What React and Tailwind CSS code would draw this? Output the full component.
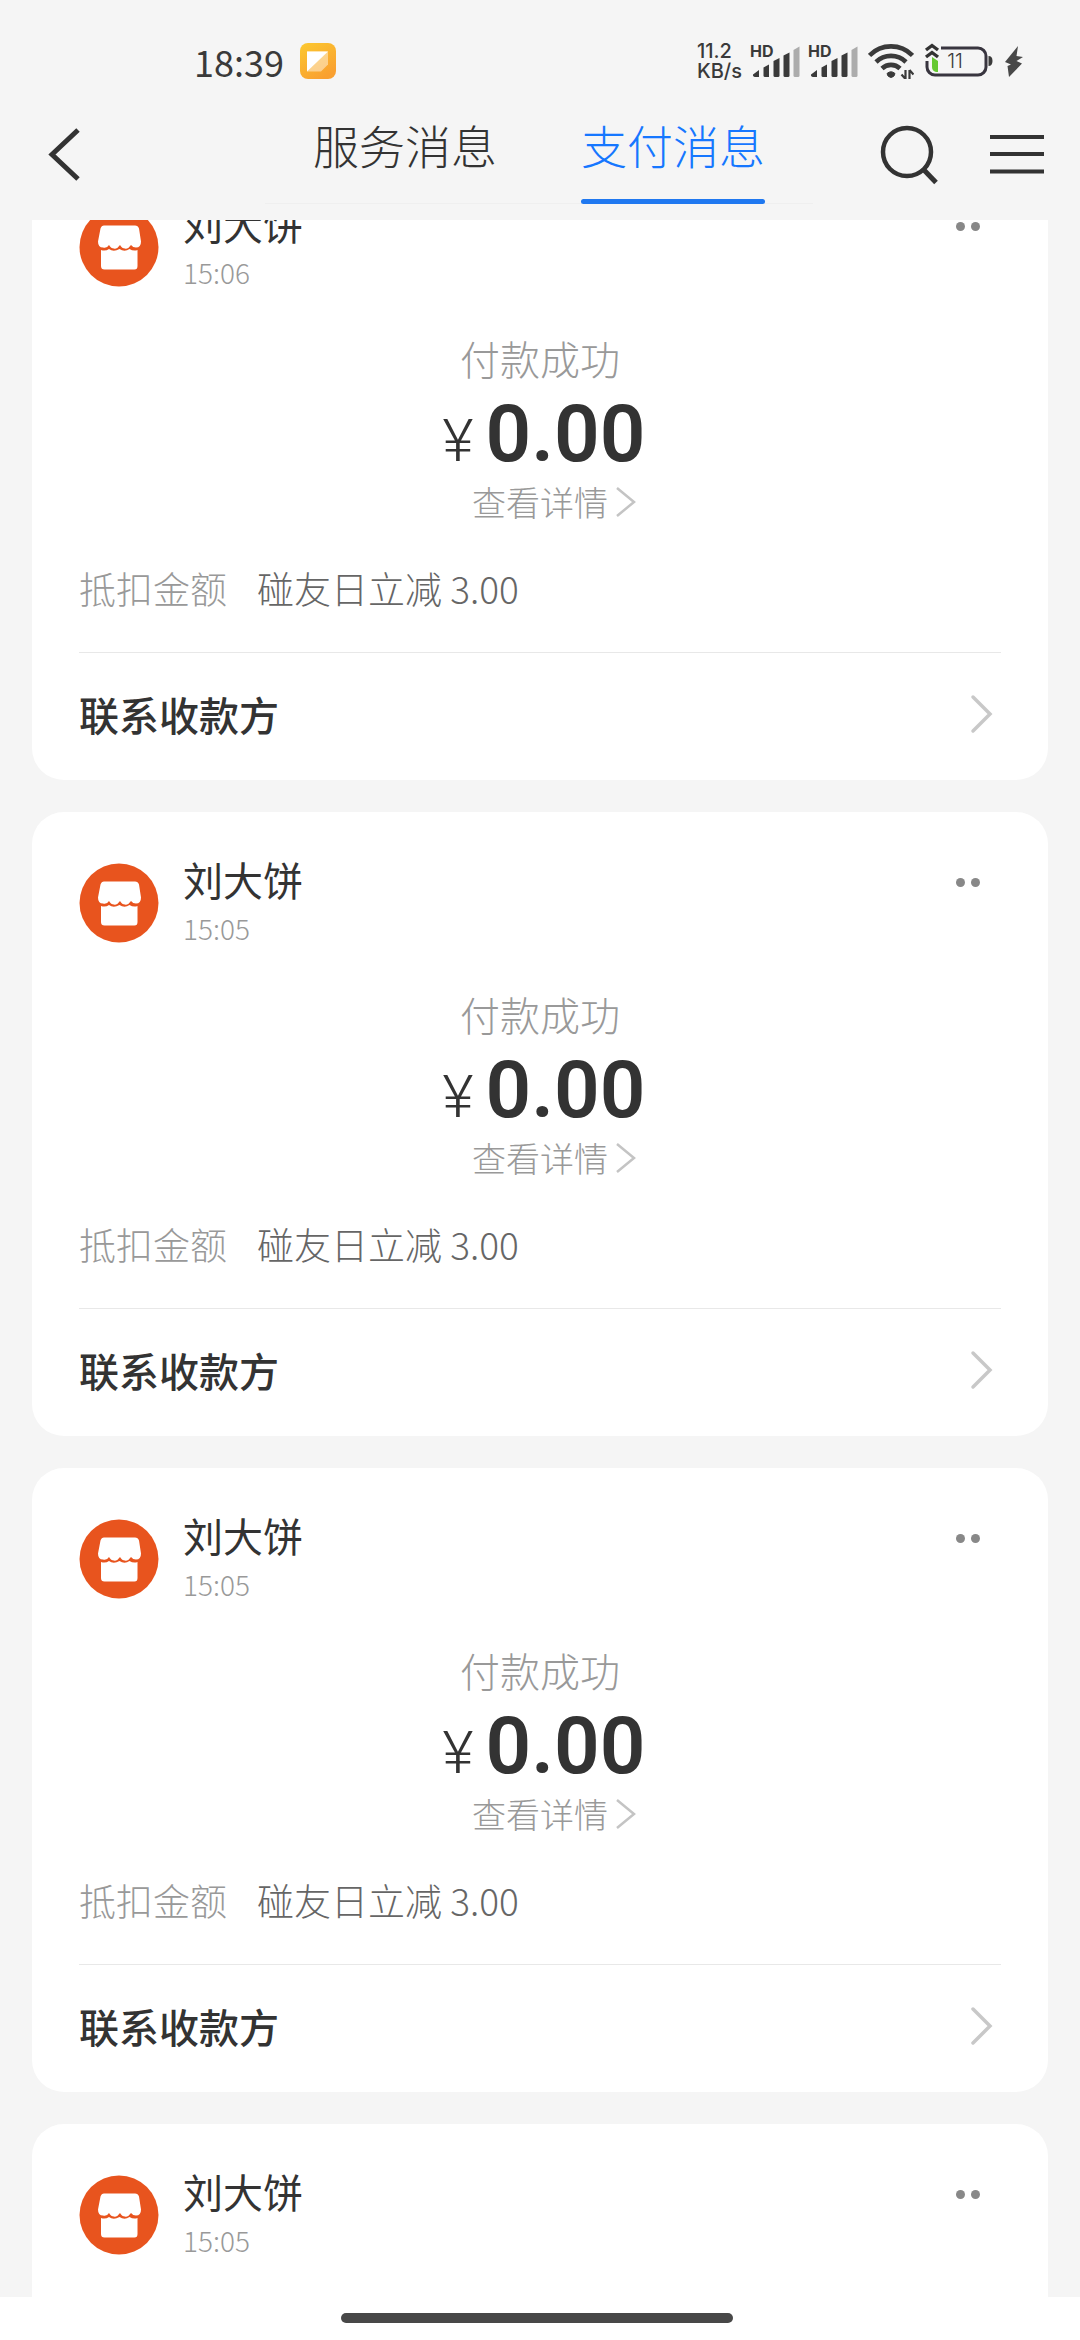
// ============================================================================
// Payment Messages Screen
// ============================================================================

const messages = [
  { id: 1, merchant: '刘大饼', time: '15:06', amount: '0.00', discount: '碰友日立减 3.00' },
  { id: 2, merchant: '刘大饼', time: '15:05', amount: '0.00', discount: '碰友日立减 3.00' },
  { id: 3, merchant: '刘大饼', time: '15:05', amount: '0.00', discount: '碰友日立减 3.00' },
  { id: 4, merchant: '刘大饼', time: '15:05', amount: '0.00', discount: '碰友日立减 3.00' },
];

// ── Icons ───────────────────────────────────────────────────────────────────
const NoteIcon = () => (
  <svg className="size-9" viewBox="0 0 36 36" aria-hidden="true">
    <defs>
      <linearGradient id="note" x1="0" y1="0" x2="0.6" y2="1">
        <stop offset="0" stopColor="#fcc92f" />
        <stop offset="1" stopColor="#f9a030" />
      </linearGradient>
    </defs>
    <rect width="36" height="36" rx="8" fill="url(#note)" />
    <path d="M7 8.500h21v13l-7 7H7z" fill="#fff" fillOpacity="0.45" />
    <path d="M7 8.500h21L7 28.500z" fill="#fff" />
  </svg>
);

const SignalIcon = () => (
  <div className="relative h-9 w-12">
    <span className="absolute -left-0.5 top-0 font-['Inter'] text-base leading-4 font-bold">HD</span>
    <svg className="h-9 w-12" viewBox="0 0 48 36" aria-hidden="true">
      <path d="M1 31.500l6-4.500v7H3a2 2 0 0 1-2-2.500z" fill="#3a3a3a" />
      <path d="M11.500 24.500l5.500-3V34h-4a1.500 1.500 0 0 1-1.500-1.500z" fill="#3a3a3a" />
      <path d="M21.500 18l6-3v17.500a1.500 1.500 0 0 1-1.500 1.500h-3a1.500 1.500 0 0 1-1.500-1.500z" fill="#3a3a3a" />
      <path d="M31.500 12.500l6-3v23a1.500 1.500 0 0 1-1.500 1.500h-3a1.500 1.500 0 0 1-1.500-1.500z" fill="#3a3a3a" />
      <path d="M41.500 7l6-3.500v29a1.500 1.500 0 0 1-1.500 1.500h-3a1.500 1.500 0 0 1-1.500-1.500z" fill="#acacac" />
    </svg>
  </div>
);

const WifiIcon = () => (
  <svg className="h-9 w-[46px]" viewBox="0 0 46 36" fill="none" aria-hidden="true">
    <g stroke="#3a3a3a" strokeWidth="4.600">
      <path d="M1.500 12.500a30 30 0 0 1 43 0" />
      <path d="M8 19a21.500 21.500 0 0 1 30 0" />
      <path d="M14 25.500a13 13 0 0 1 18 0" />
    </g>
    <path d="M19 30.500q4-3.500 8 0l-1 2.500q-3 3-6 0z" fill="#3a3a3a" stroke="#3a3a3a" />
    <path d="M37.500 27v9M37.500 36l-4-4.500M41.500 36v-9M41.500 27l4 4.500" stroke="#3a3a3a" strokeWidth="2.200" />
  </svg>
);

const BatteryIcon = () => (
  <div className="relative h-9 w-[70px]">
    <svg className="h-9 w-[70px]" viewBox="0 0 70 36" fill="none" aria-hidden="true">
      <path
        d="M17 5h37a8 8 0 0 1 8 8v11a8 8 0 0 1-8 8H11a8 8 0 0 1-8-8v-6"
        stroke="#38353f"
        strokeWidth="3"
      />
      <path d="M64.500 13q4 0 4 5t-4 5z" fill="#3a3a3a" />
      <path d="M8 14l6 4v11h-2q-4-1-4-5z" fill="#65c832" />
      <path d="M2 7l6-4.500L14 7M2 14l6-4.500 6 4.500" stroke="#333" strokeWidth="3.400" />
    </svg>
    <span className="absolute inset-x-0 top-1.5 pr-2 text-center font-['Inter'] text-xl leading-6 font-light">
      11
    </span>
  </div>
);

const BoltIcon = () => (
  <svg className="h-9 w-5" viewBox="0 0 20 36" fill="#484848" aria-hidden="true">
    <path d="M14 3L1 19l6 2.500-3.500 1.500L5 34l13-13.500-5.500-2.500L19 14l-6.500-1z" />
  </svg>
);

const ShopIcon = () => (
  <svg className="size-20 shrink-0" viewBox="0 0 80 80" aria-hidden="true">
    <circle cx="40" cy="40" r="39.500" fill="#e8541e" />
    <path
      d="M25 18.500h31q3 0 4 3l2 13q0 6-5 6-3 0-5-2.500-3 4.500-6 3.500-3 0-5-3.500-3 4.500-6 3.500-3 0-5-3.500-2 3.500-6 2.500-5 0-5-6l2.500-13q1-3 3.500-3z"
      fill="#fff"
    />
    <path
      d="M22 43q4.500 1.500 8-1 4.500 3.500 10.500 0 5 3.500 10 0 4 2.500 8 1v16q0 3.500-3 3.500h-30q-3.500 0-3.500-3.500z"
      fill="#fff"
    />
  </svg>
);

// ── Status Bar ──────────────────────────────────────────────────────────────
const StatusBar = () => (
  <div className="flex h-[122px] items-center justify-between pr-14 pl-[194px] text-[#3a3a3a]">
    <div className="flex items-center gap-4">
      <span className="text-4xl leading-10">18:39</span>
      <NoteIcon />
    </div>
    <div className="flex items-center gap-2.5">
      <div className="font-['Inter'] text-xl leading-5 font-medium">
        <p>11.2</p>
        <p>KB/s</p>
      </div>
      <SignalIcon />
      <SignalIcon />
      <WifiIcon />
      <BatteryIcon />
      <BoltIcon />
    </div>
  </div>
);

// ── Navigation ──────────────────────────────────────────────────────────────
const NavBar = () => (
  <nav className="flex h-[82px] items-start pr-9 pl-11">
    <button type="button" aria-label="返回" className="pt-1">
      <svg className="h-14 w-10" viewBox="0 0 40 56" fill="none" aria-hidden="true">
        <path d="M34 4L8 28.500 34 53" stroke="#333" strokeWidth="5" />
      </svg>
    </button>
    <div className="ml-[181px] flex h-full gap-[84px] border-b border-[#efefef] px-12">
      <a href="#service" className="text-[46px] leading-11 font-light text-[#333]">
        服务消息
      </a>
      <a href="#payment" className="relative text-[46px] leading-11 font-light text-[#1677ff]">
        支付消息
        <span className="absolute inset-x-0 -bottom-px h-[5px] rounded-full bg-[#1f78f0]" />
      </a>
    </div>
    <div className="ml-auto flex items-center gap-[52px]">
      <button type="button" aria-label="搜索">
        <svg className="size-16" viewBox="0 0 64 64" fill="none" stroke="#333" aria-hidden="true">
          <circle cx="33" cy="30" r="24" strokeWidth="4.500" />
          <path d="M50 48l12 12.500" strokeWidth="5" />
        </svg>
      </button>
      <button type="button" aria-label="菜单">
        <svg className="h-16 w-[54px]" viewBox="0 0 54 64" stroke="#333" strokeWidth="4" aria-hidden="true">
          <path d="M0 15h54M0 32h54M0 49.500h54" />
        </svg>
      </button>
    </div>
  </nav>
);

// ── Message Card ────────────────────────────────────────────────────────────
const MessageCard = ({ message }) => (
  <article className="shrink-0 rounded-[32px] bg-white px-[47px] pt-[42px] text-[#333]">
    <div className="flex items-center">
      <ShopIcon />
      <div className="ml-6 flex-1">
        <h2 className="text-[40px] leading-[50px] font-normal">{message.merchant}</h2>
        <p className="text-[28px] leading-12 font-light text-[#999]">{message.time}</p>
      </div>
      <button
        type="button"
        aria-label="更多"
        className="flex h-14 w-[66px] items-center justify-center gap-1.5 self-start"
      >
        <span className="size-[9px] rounded-full bg-[#888]" />
        <span className="size-[9px] rounded-full bg-[#888]" />
      </button>
    </div>

    <div className="mt-8 flex flex-col items-center">
      <p className="text-[40px] leading-[60px] font-light text-[#999]">付款成功</p>
      <p className="flex h-[92px] items-baseline gap-3 pl-2 font-['Roboto'] leading-[92px]">
        <span className="text-[60px] font-light">¥</span>
        <span className="text-[80px] font-semibold">{message.amount}</span>
      </p>
      <a href="#detail" className="ml-7 flex items-center gap-2 text-[34px] leading-11 font-light text-[#999]">
        查看详情
        <svg className="h-8 w-5" viewBox="0 0 20 32" fill="none" aria-hidden="true">
          <path d="M1 2l17 14L1 30" stroke="#c4c4c4" strokeWidth="2.500" />
        </svg>
      </a>
    </div>

    <div className="mt-9 flex gap-[30px] border-b border-[#e8e8e8] pb-9 text-[37px] leading-14 font-light">
      <span className="text-[#999]">抵扣金额</span>
      <span className="text-[#666]">{message.discount}</span>
    </div>

    <button type="button" className="flex h-[127px] w-full items-center justify-between pr-2 pb-1.5">
      <span className="text-[40px] leading-14 font-medium">联系收款方</span>
      <svg className="h-10 w-6" viewBox="0 0 24 40" fill="none" aria-hidden="true">
        <path d="M4 3l17 17L4 37" stroke="#c8c8c8" strokeWidth="3.500" strokeLinecap="round" />
      </svg>
    </button>
  </article>
);

// ── Screen ──────────────────────────────────────────────────────────────────
const App = () => (
  <div className="flex h-screen flex-col overflow-hidden bg-[#f5f5f5] font-['Noto_Sans_CJK_SC',sans-serif]">
    <header className="z-10 bg-[#f5f5f5] pb-4">
      <StatusBar />
      <NavBar />
    </header>

    <main className="min-h-0 flex-1 overflow-hidden px-8">
      <div className="-mt-16 flex flex-col gap-8">
        {messages.map((message) => (
          <MessageCard key={message.id} message={message} />
        ))}
      </div>
    </main>

    <footer className="z-10 flex h-[43px] justify-center bg-white pt-4 pr-1.5">
      <div className="h-2.5 w-[392px] rounded-full bg-[#484848]" />
    </footer>
  </div>
);

export default App;
